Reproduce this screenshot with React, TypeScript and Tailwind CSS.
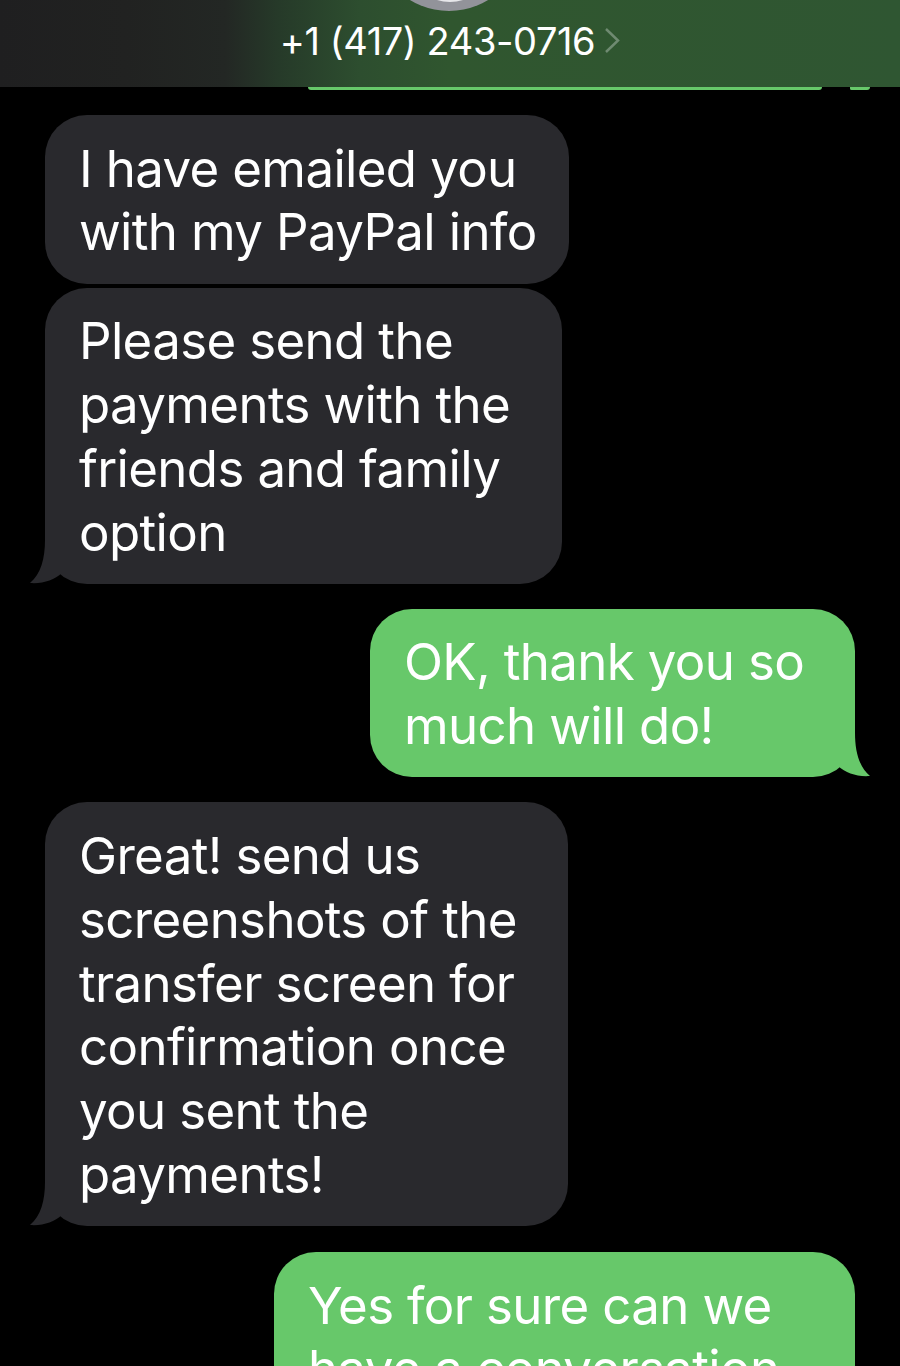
const fontClass = "font-['Inter','Liberation_Sans',sans-serif]";

function TailLeft() {
  return (
    <svg className="absolute bottom-0 left-[-16px]" width="44" height="44" viewBox="0 0 44 44">
      <path d="M16 0 C16 18 12 34 1 43 C14 44 25 40 33 33 L33 0 Z" fill="#29292d" />
    </svg>
  );
}

function TailRight() {
  return (
    <svg className="absolute bottom-0 right-[-16px]" width="44" height="44" viewBox="0 0 44 44">
      <path d="M28 0 C28 18 32 34 43 43 C30 44 19 40 11 33 L11 0 Z" fill="#67c86a" />
    </svg>
  );
}

function Incoming({ lines, width, tail, marginTop }: { lines: string[]; width: string; tail?: boolean; marginTop: string }) {
  return (
    <div className={`relative ml-[45px] ${width} ${marginTop} rounded-[42px] bg-[#29292d] pb-[19.4px] pl-[34px] pr-[20px] pt-[21.6px] text-white`}>
      {lines.map((line) => (
        <div key={line} className="whitespace-nowrap">{line}</div>
      ))}
      {tail && <TailLeft />}
    </div>
  );
}

function Outgoing({ lines, width, tail, marginTop }: { lines: string[]; width: string; tail?: boolean; marginTop: string }) {
  return (
    <div className={`relative ml-auto mr-[45px] ${width} ${marginTop} shrink-0 rounded-[42px] bg-[#67c86a] pb-[19.4px] pl-[34px] pr-[20px] pt-[21.6px] text-white`}>
      {lines.map((line) => (
        <div key={line} className="whitespace-nowrap">{line}</div>
      ))}
      {tail && <TailRight />}
    </div>
  );
}

export default function App() {
  return (
    <div className={`flex h-[1366px] w-[900px] flex-col overflow-hidden bg-black ${fontClass}`}>
      <header className="relative flex h-[87px] shrink-0 items-start justify-center overflow-hidden bg-[linear-gradient(90deg,#1f1f20_0%,#212221_14%,#232724_25%,#263a29_31%,#2d4e2f_40%,#30562f_50%,#2f5632_100%)] pt-[20px]">
        <div className="absolute left-[374px] top-[-139px] h-[150px] w-[150px] overflow-hidden rounded-full bg-[#92939a]">
          <div className="absolute left-[33px] top-[55px] h-[86px] w-[86px] rounded-full bg-[#e7e7ea]" />
        </div>
        <span className="text-[38px] leading-[42px] tracking-[-0.4px] text-white">+1 (417) 243-0716</span>
        <svg className="ml-[9px] mt-[7px]" width="16" height="27" viewBox="0 0 16 27" fill="none">
          <path d="M2 2 L14 13.5 L2 25" stroke="#6f8a71" strokeWidth="2.5" />
        </svg>
      </header>

      <div className="flex h-[3px] shrink-0">
        <div className="ml-[308px] h-full w-[514px] rounded-b-[6px] bg-[#67c86a]" />
        <div className="ml-[28px] h-full w-[20px] rounded-bl-[6px] rounded-br-[12px] bg-[#67c86a]" />
      </div>

      <div className="flex flex-col text-[51px] leading-[63.8px] tracking-[-0.65px]">
        <Incoming marginTop="mt-[25px]" width="w-[524px]" lines={["I have emailed you", "with my PayPal info"]} />
        <Incoming marginTop="mt-[4px]" width="w-[517px]" tail lines={["Please send the", "payments with the", "friends and family", "option"]} />
        <Outgoing marginTop="mt-[25px]" width="w-[485px]" tail lines={["OK, thank you so", "much will do!"]} />
        <Incoming marginTop="mt-[25px]" width="w-[523px]" tail lines={["Great! send us", "screenshots of the", "transfer screen for", "confirmation once", "you sent the", "payments!"]} />
        <Outgoing marginTop="mt-[26px]" width="w-[581px]" lines={["Yes for sure can we", "have a conversation"]} />
      </div>
    </div>
  );
}
